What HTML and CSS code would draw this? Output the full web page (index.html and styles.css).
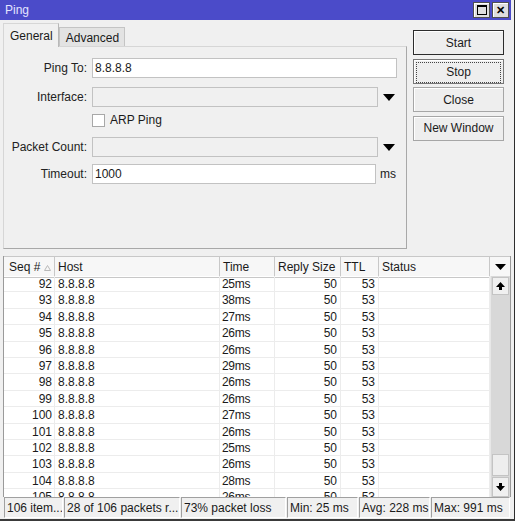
FILE: index.html
```html
<!DOCTYPE html>
<html>
<head>
  <meta charset="utf-8">
  <title>Ping</title>
  <link rel="stylesheet" href="styles.css">
</head>
<body>
  <div class="window">
    <div class="titlebar">
      <span class="title">Ping</span>
      <span class="tb-btn tb-max"><span class="max-box"></span></span>
      <span class="tb-btn tb-close">✕</span>
    </div>

    <div class="top">
      <div class="tabs">
        <div class="tab-strip">
          <div class="tab active">General</div>
          <div class="tab">Advanced</div>
        </div>
        <div class="tab-panel">
          <div class="field">
            <label>Ping To:</label>
            <div class="input wide">8.8.8.8</div>
          </div>
          <div class="field loose">
            <label>Interface:</label>
            <div class="input combo disabled"></div>
            <svg class="drop" width="12" height="7" viewBox="0 0 12 7"><polygon points="0,0 12,0 6,7"/></svg>
          </div>
          <div class="field check-row">
            <label></label>
            <span class="checkbox"></span>
            <span>ARP Ping</span>
          </div>
          <div class="field loose">
            <label>Packet Count:</label>
            <div class="input combo disabled"></div>
            <svg class="drop" width="12" height="7" viewBox="0 0 12 7"><polygon points="0,0 12,0 6,7"/></svg>
          </div>
          <div class="field">
            <label>Timeout:</label>
            <div class="input timeout">1000</div>
            <span class="unit">ms</span>
          </div>
        </div>
      </div>

      <div class="actions">
        <button class="default">Start</button>
        <button class="focused"><span>Stop</span></button>
        <button>Close</button>
        <button>New Window</button>
      </div>
    </div>

    <div class="list">
      <div class="list-head">
        <div class="th seq">Seq # <svg width="7" height="6" viewBox="0 0 7 6"><polygon points="3.5,0.5 6.5,5.5 0.5,5.5" fill="none" stroke="#b8b8b8"/></svg></div>
        <div class="th">Host</div>
        <div class="th">Time</div>
        <div class="th">Reply Size</div>
        <div class="th">TTL</div>
        <div class="th">Status</div>
        <div class="th menu"><svg width="11" height="6" viewBox="0 0 11 6"><polygon points="0,0 11,0 5.5,6"/></svg></div>
      </div>
      <div class="list-body">
        <div class="rows">
          <div class="tr"><span class="num">92</span><span>8.8.8.8</span><span>25ms</span><span class="num">50</span><span class="num">53</span><span></span></div>
          <div class="tr"><span class="num">93</span><span>8.8.8.8</span><span>38ms</span><span class="num">50</span><span class="num">53</span><span></span></div>
          <div class="tr"><span class="num">94</span><span>8.8.8.8</span><span>27ms</span><span class="num">50</span><span class="num">53</span><span></span></div>
          <div class="tr"><span class="num">95</span><span>8.8.8.8</span><span>26ms</span><span class="num">50</span><span class="num">53</span><span></span></div>
          <div class="tr"><span class="num">96</span><span>8.8.8.8</span><span>26ms</span><span class="num">50</span><span class="num">53</span><span></span></div>
          <div class="tr"><span class="num">97</span><span>8.8.8.8</span><span>29ms</span><span class="num">50</span><span class="num">53</span><span></span></div>
          <div class="tr"><span class="num">98</span><span>8.8.8.8</span><span>26ms</span><span class="num">50</span><span class="num">53</span><span></span></div>
          <div class="tr"><span class="num">99</span><span>8.8.8.8</span><span>26ms</span><span class="num">50</span><span class="num">53</span><span></span></div>
          <div class="tr"><span class="num">100</span><span>8.8.8.8</span><span>27ms</span><span class="num">50</span><span class="num">53</span><span></span></div>
          <div class="tr"><span class="num">101</span><span>8.8.8.8</span><span>26ms</span><span class="num">50</span><span class="num">53</span><span></span></div>
          <div class="tr"><span class="num">102</span><span>8.8.8.8</span><span>25ms</span><span class="num">50</span><span class="num">53</span><span></span></div>
          <div class="tr"><span class="num">103</span><span>8.8.8.8</span><span>26ms</span><span class="num">50</span><span class="num">53</span><span></span></div>
          <div class="tr"><span class="num">104</span><span>8.8.8.8</span><span>28ms</span><span class="num">50</span><span class="num">53</span><span></span></div>
          <div class="tr"><span class="num">105</span><span>8.8.8.8</span><span>26ms</span><span class="num">50</span><span class="num">53</span><span></span></div>
        </div>
        <div class="vscroll">
          <div class="sb-btn"><svg width="9" height="8" viewBox="0 0 9 8"><polygon points="4.5,0 9,5 6,5 6,8 3,8 3,5 0,5"/></svg></div>
          <div class="sb-track"></div>
          <div class="sb-thumb"></div>
          <div class="sb-btn down"><svg width="9" height="8" viewBox="0 0 9 8"><polygon points="3,0 6,0 6,3 9,3 4.5,8 0,3 3,3"/></svg></div>
        </div>
      </div>
    </div>

    <div class="statusbar">
      <div class="cell c1">106 item...</div>
      <div class="cell c2">28 of 106 packets r...</div>
      <div class="cell c3">73% packet loss</div>
      <div class="cell c4">Min: 25 ms</div>
      <div class="cell c5">Avg: 228 ms</div>
      <div class="cell c6">Max: 991 ms</div>
    </div>
  </div>
</body>
</html>
```

FILE: styles.css
```css
body {
  margin: 0;
  font-family: 'Liberation Sans', Arial, sans-serif;
  font-size: 12px;
  color: #1a1a1a;
  background: #fff;
}

.window {
  width: 511px;
  height: 519px;
  padding-right: 3px;
  background: #f0f0f0;
  border-right: 1px solid #2e2e2e;
  border-bottom: 2px solid #3a3a3a;
  display: flex;
  flex-direction: column;
}

/* title bar */
.titlebar {
  height: 20px;
  background: #4b4bc9;
  color: #e4e4ff;
  display: flex;
  align-items: center;
  padding: 0 2px 0 5px;
}

.title {
  flex: 1;
  font-size: 12px;
}

.tb-btn {
  width: 15px;
  height: 14px;
  background: #dedede;
  border: 1px solid #505050;
  box-shadow: inset 1px 1px #fff;
  margin-left: 2px;
  display: flex;
  align-items: center;
  justify-content: center;
  color: #000;
  font-weight: bold;
  font-size: 11px;
  line-height: 1;
}

.max-box {
  width: 8px;
  height: 7px;
  border: 1px solid #000;
  border-top-width: 2px;
}

/* top area: tabs + buttons */
.top {
  height: 236px;
  display: flex;
}

.tabs {
  margin-left: 3px;
  width: 404px;
  padding-top: 3px;
}

.tab-strip {
  display: flex;
  align-items: flex-end;
  height: 23px;
}

.tab {
  height: 19px;
  line-height: 20px;
  padding: 0 5px 0 6px;
  background: #e3e3e3;
  border: 1px solid #c4c4c4;
  border-bottom: none;
  box-sizing: border-box;
}

.tab.active {
  height: 24px;
  line-height: 25px;
  background: #f0f0f0;
  border-color: #d6d6d6;
  border-right-color: #b8b8b8;
  position: relative;
  top: 1px;
  z-index: 1;
}

.tab-panel {
  height: 203px;
  box-sizing: border-box;
  border: 1px solid #d6d6d6;
  border-right-color: #a8a8a8;
  border-bottom-color: #a8a8a8;
  padding-top: 11px;
}

.field {
  display: flex;
  align-items: center;
  height: 20px;
  margin-top: 7px;
}

.field:first-child {
  margin-top: 0;
}

.field.loose {
  margin-top: 9px;
}

.field.check-row {
  height: 16px;
  margin-top: 5px;
}

.field label {
  width: 83px;
  text-align: right;
  margin-right: 5px;
  color: #222;
}

.input {
  height: 20px;
  box-sizing: border-box;
  border: 1px solid #c2c2c2;
  background: #fff;
  padding: 2px 2px 0;
  line-height: 15px;
}

.input.wide { width: 305px; }
.input.combo { width: 286px; }
.input.timeout { width: 284px; }

.input.disabled {
  background: #f0f0f0;
}

.drop {
  margin-left: 5px;
}

.checkbox {
  width: 13px;
  height: 13px;
  box-sizing: border-box;
  border: 1px solid #a8a8a8;
  background: #fff;
  margin-right: 5px;
}

.unit {
  margin-left: 4px;
}

/* right side buttons */
.actions {
  margin-left: 6px;
  width: 91px;
  padding-top: 10px;
  display: flex;
  flex-direction: column;
  gap: 3.5px;
}

button {
  height: 25px;
  font: inherit;
  color: #1a1a1a;
  background: #eeeeee;
  border: 1px solid #a6a6a6;
  box-shadow: inset 1px 1px #fff;
  padding: 0;
}

button.default {
  border-color: #2c2c2c;
}

button.focused {
  border-color: #777;
  padding: 2px;
}

button.focused span {
  display: block;
  height: 100%;
  line-height: 19px;
  border: 1px dotted #444;
}

/* list */
.list {
  margin-left: 3px;
  width: 506px;
  height: 241px;
  border-left: 1px solid #9a9a9a;
  border-right: 1px solid #9a9a9a;
  background: #fff;
}

.list-head {
  display: grid;
  grid-template-columns: 51px 165px 55px 66px 38px 111px 20px;
  height: 20px;
  background: #f7f7f7;
  border-top: 1px solid #c8c8c8;
  box-sizing: border-box;
}

.th {
  border-right: 1px solid #c8c8c8;
  border-bottom: 1px solid #c8c8c8;
  padding-left: 3px;
  line-height: 20px;
  white-space: nowrap;
}

.th.seq {
  padding-left: 5px;
}

.th.menu {
  border-right: none;
  padding: 0;
  display: flex;
  align-items: center;
  justify-content: center;
}

.list-body {
  display: flex;
  height: 221px;
  overflow: hidden;
}

.rows {
  width: 486px;
  overflow: hidden;
}

.tr {
  display: grid;
  grid-template-columns: 51px 165px 55px 66px 38px 111px;
  height: 16.4px;
  box-sizing: border-box;
  border-bottom: 1px solid #ececec;
  line-height: 17px;
}

.tr span {
  border-right: 1px solid #ececec;
  padding-left: 3px;
  white-space: nowrap;
  overflow: hidden;
}

.tr span:nth-child(3) {
  padding-left: 2px;
  letter-spacing: -0.3px;
}

.tr span.num {
  text-align: right;
  padding: 0 3px 0 0;
}

.tr span.num:first-child {
  padding-right: 2px;
}

/* scrollbar */
.vscroll {
  width: 20px;
  background: #d8d8d8;
  border-left: 1px solid #e8e8e8;
  box-sizing: border-box;
  display: flex;
  flex-direction: column;
  padding: 1px 1px 0;
}

.sb-btn {
  height: 16px;
  background: #f0f0f0;
  border: 1px solid #c4c4c4;
  display: flex;
  align-items: center;
  justify-content: center;
}

.sb-btn.down {
  height: 18px;
  margin-top: 1px;
}

.sb-track {
  flex: 1;
}

.sb-thumb {
  height: 22px;
  background: #eeeeee;
  border: 1px solid #c4c4c4;
  box-sizing: border-box;
}

/* status bar */
.statusbar {
  display: flex;
  gap: 1px;
  margin-left: 4px;
  height: 21px;
}

.cell {
  box-sizing: border-box;
  border: 1px solid #fff;
  border-top-color: #a0a0a0;
  border-left-color: #a0a0a0;
  padding-left: 2px;
  line-height: 20px;
  white-space: nowrap;
  overflow: hidden;
}

.c1 { width: 59px; }
.c2 { width: 116px; }
.c3 { width: 105px; }
.c4 { width: 71px; }
.c5 { width: 71px; }
.c6 { width: 79px; }
```
